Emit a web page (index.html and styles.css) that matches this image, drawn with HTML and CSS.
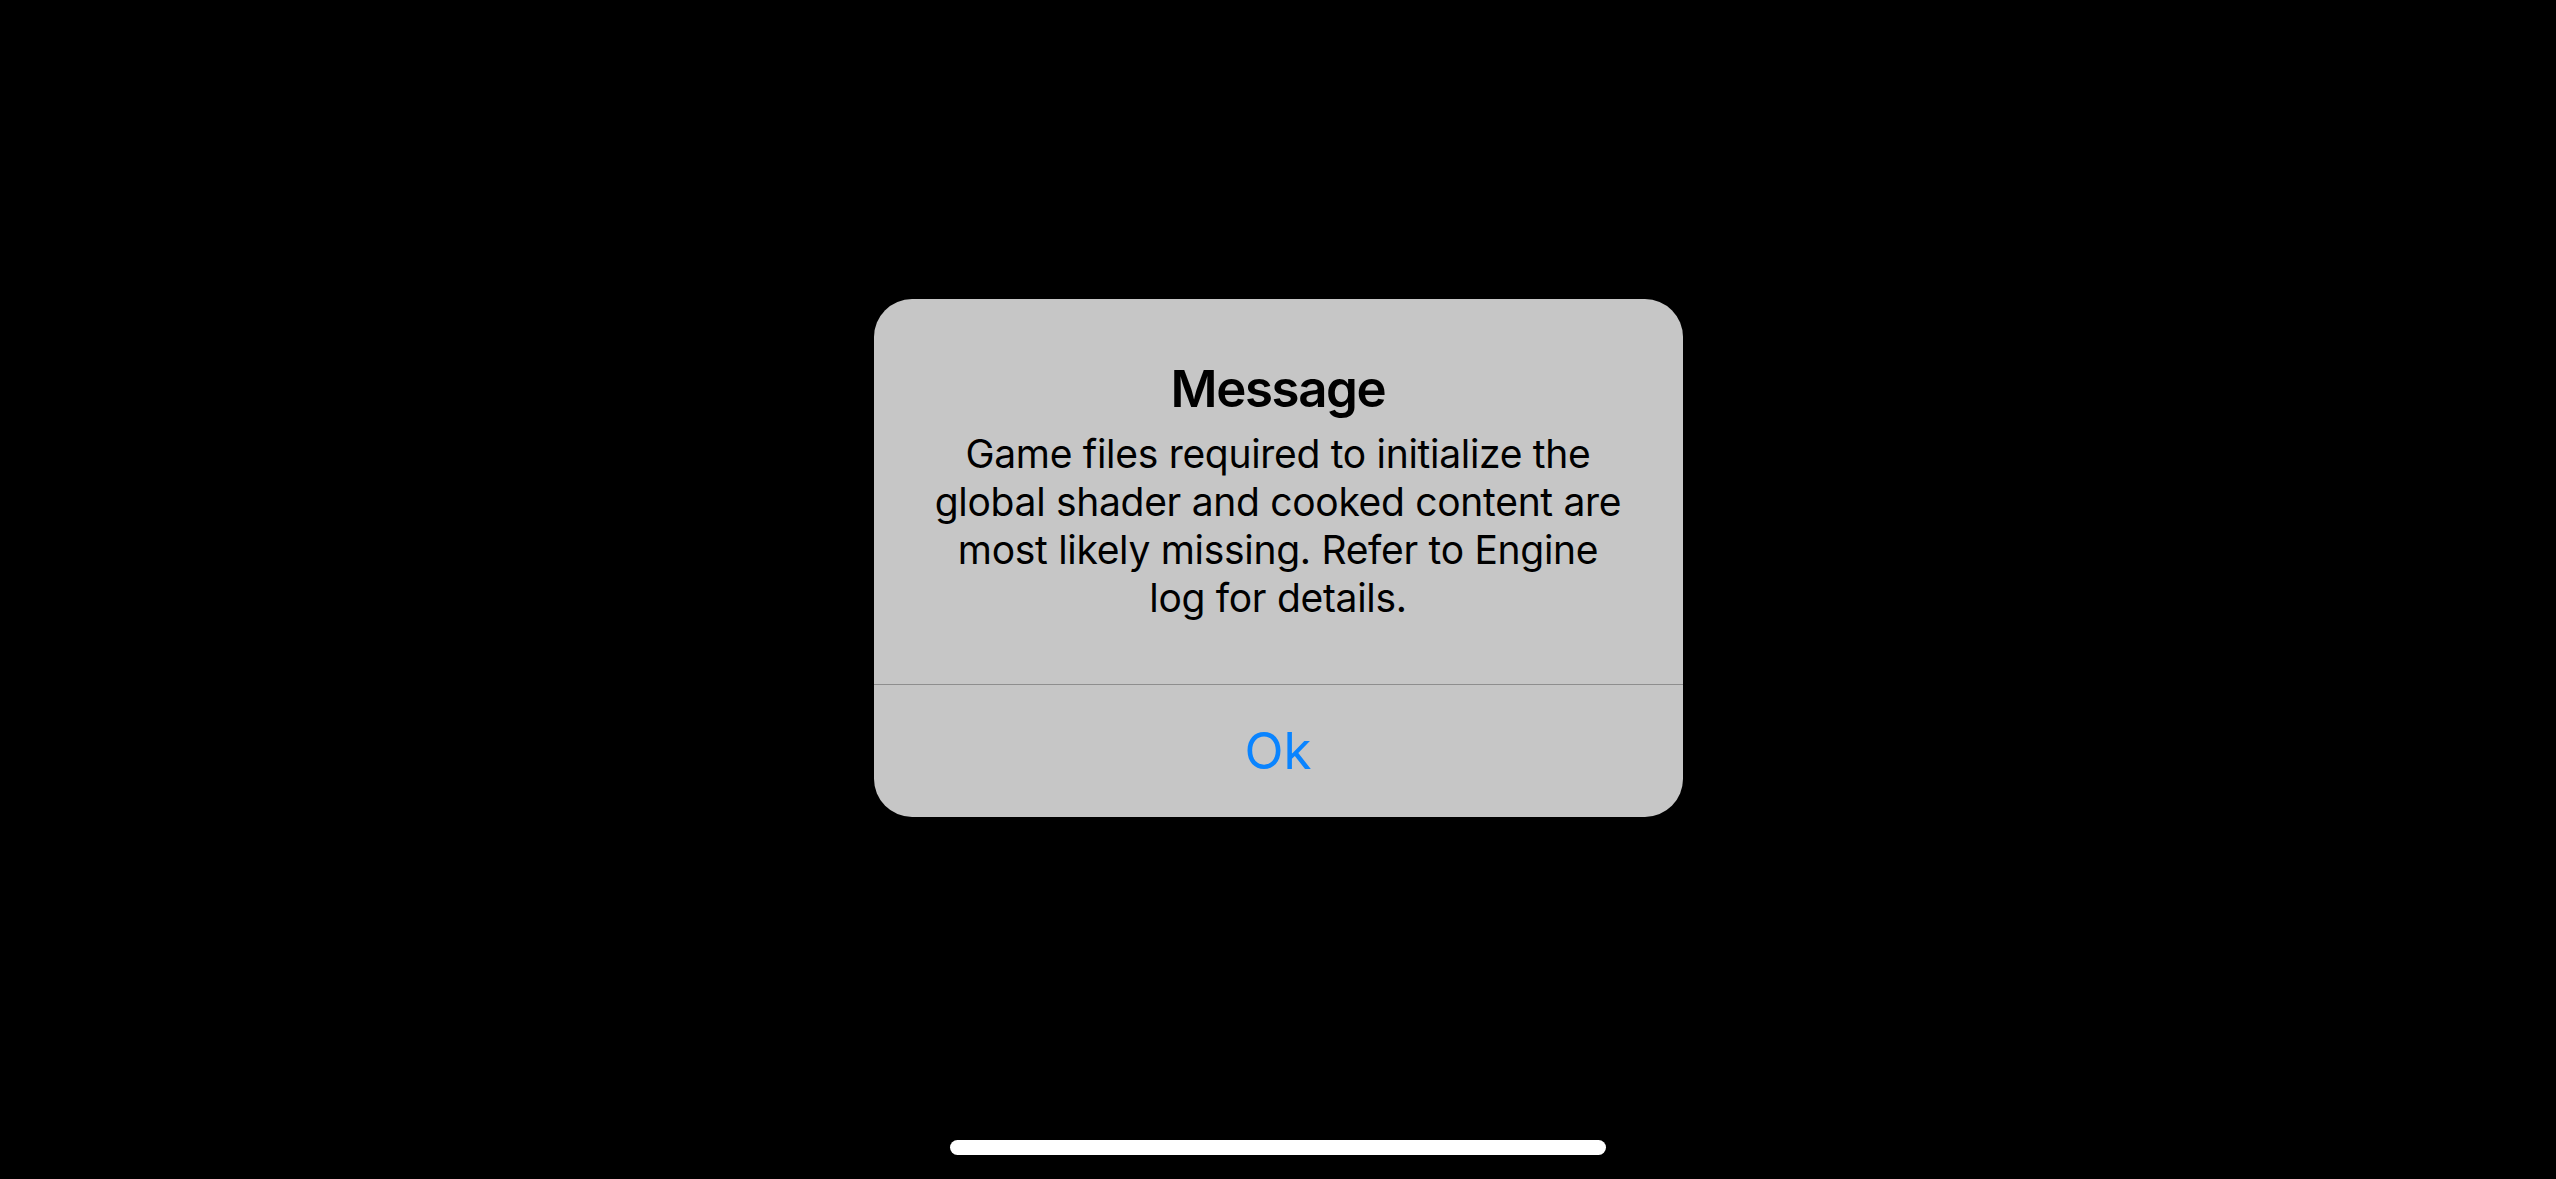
FILE: index.html
```html
<!DOCTYPE html>
<html lang="en">
<head>
<meta charset="utf-8">
<title>Message</title>
<link rel="stylesheet" href="styles.css">
</head>
<body>
<div class="screen">
  <div class="alert">
    <div class="alert-content">
      <div class="alert-title">Message</div>
      <div class="alert-message">Game files required to initialize the<br>global shader and cooked content are<br>most likely missing. Refer to Engine<br>log for details.</div>
    </div>
    <div class="alert-actions">
      <div class="alert-button">Ok</div>
    </div>
  </div>
  <div class="spacer"></div>
  <div class="home-indicator"></div>
</div>
</body>
</html>
```

FILE: styles.css
```css
html, body {
  margin: 0;
  padding: 0;
  background: #000;
}

.screen {
  width: 2556px;
  height: 1179px;
  display: flex;
  flex-direction: column;
  align-items: center;
  overflow: hidden;
  font-family: Inter, "Noto Sans", "Liberation Sans", sans-serif;
}

.alert {
  margin-top: 299px;
  width: 809px;
  background: #c6c6c6;
  border-radius: 38px;
  display: flex;
  flex-direction: column;
  overflow: hidden;
}

.alert-content {
  padding: 57px 48px 62px;
  text-align: center;
  color: #000;
}

.alert-title {
  font-size: 51px;
  font-weight: 600;
  line-height: 66px;
  letter-spacing: -1.4px;
}

.alert-message {
  margin-top: 8px;
  font-size: 39px;
  line-height: 48px;
  font-weight: 400;
  letter-spacing: -0.3px;
}

.alert-actions {
  border-top: 1px solid #8e8e8e;
}

.alert-button {
  height: 132px;
  line-height: 132px;
  text-align: center;
  font-size: 51px;
  color: #0a84ff;
}

.spacer {
  flex: 1;
}

.home-indicator {
  width: 656px;
  height: 15px;
  border-radius: 8px;
  background: #fff;
  margin-bottom: 24px;
}
```
